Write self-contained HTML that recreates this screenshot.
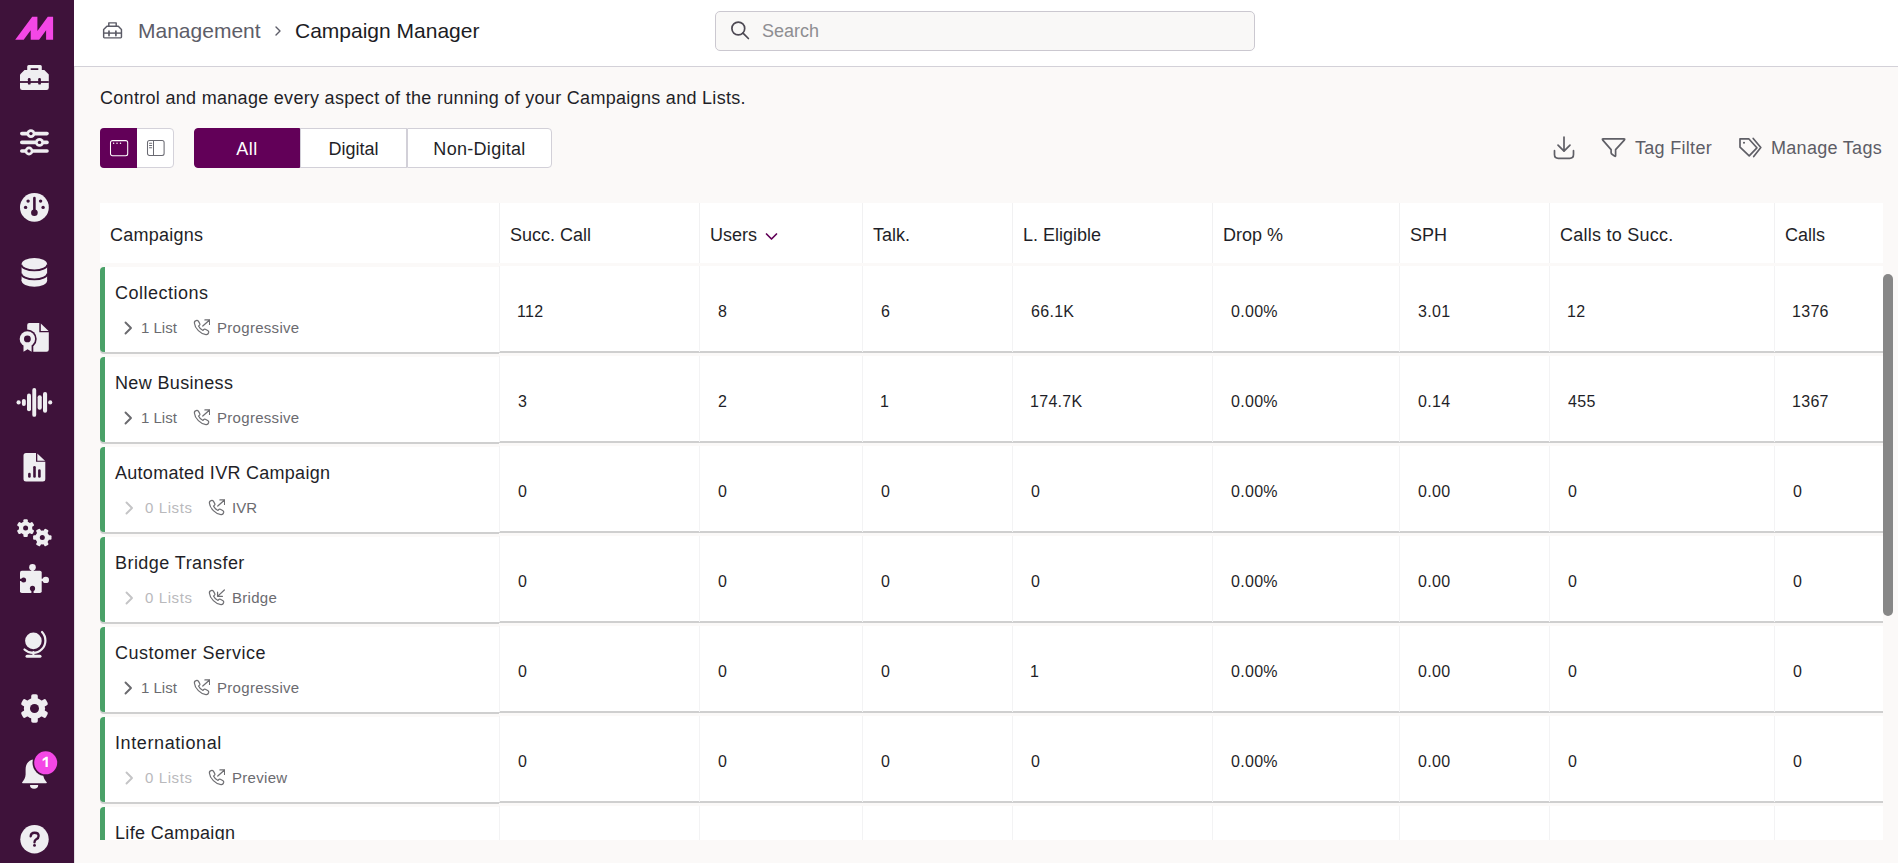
<!DOCTYPE html>
<html><head><meta charset="utf-8">
<style>
*{box-sizing:border-box;margin:0;padding:0}
html,body{width:1898px;height:863px;overflow:hidden;background:#fbf9f8;font-family:"Liberation Sans",sans-serif;color:#1d1d24;position:relative}
.abs{position:absolute}
#side{position:absolute;left:0;top:0;width:74px;height:863px;background:#3e123a}
#side::after{content:"";position:absolute;right:-1px;top:0;width:1px;height:863px;background:#e3e0e4}
#hdr{position:absolute;left:74px;top:0;width:1824px;height:67px;background:#fff;border-bottom:1px solid #d3d1d8}
.crumb{position:absolute;top:19px;font-size:21px;white-space:nowrap}
#search{position:absolute;left:715px;top:11px;width:540px;height:40px;border:1px solid #cbc8d0;border-radius:5px;background:#f9f8f7}
#sph{position:absolute;left:762px;top:21px;font-size:18px;color:#8e8e92;white-space:nowrap}
#desc{position:absolute;left:100px;top:88px;font-size:18px;letter-spacing:0.3px;white-space:nowrap;color:#1f1f28}
#vt{position:absolute;left:100px;top:128px;width:74px;height:40px;border:1px solid #d4d2da;border-radius:4px;background:#fff}
#vta{position:absolute;left:100px;top:128px;width:37px;height:40px;border-radius:4px 0 0 4px;background:#620058}
.seg{position:absolute;top:128px;height:40px;border:1px solid #d2d0d8;background:#fff;font-size:18px;text-align:center;line-height:40px;color:#1f1f28}
.act{background:#620058;color:#fff;border-color:#620058}
.tool{position:absolute;top:138px;font-size:18px;letter-spacing:0.3px;color:#5d5d66;white-space:nowrap}
#tbl{position:absolute;left:0;top:0;width:1898px;height:840px;overflow:hidden}
.th{position:absolute;top:203px;height:60px;background:#fff;font-size:18px;line-height:64px;padding-left:10px;white-space:nowrap;color:#1f1f28}
.card{position:absolute;left:100px;width:399px;height:85px;background:#fff;border-left:5px solid #4aa168;border-radius:4px 0 0 4px;box-shadow:0 2px 0 #cfcfcf}
.cname{position:absolute;left:115px;font-size:18px;letter-spacing:0.6px;white-space:nowrap;color:#1f1f28}
.sub{position:absolute;font-size:15px;letter-spacing:0.3px;white-space:nowrap;color:#6b6b70}
.chev{position:absolute;left:123px}
.ph{position:absolute}
.vd{position:absolute;width:1px;height:86px;background:#f3f3f4}
.num{position:absolute;font-size:16px;letter-spacing:0.3px;white-space:nowrap;color:#1f1f28}
#sb{position:absolute;left:1883px;top:274px;width:10px;height:342px;border-radius:5px;background:#878787}

.card2{position:absolute;left:499px;width:1384px;height:85px;background:#fff;box-shadow:0 2px 0 #cfcfcf}

</style></head><body>
<div id="side">
<svg width="74" height="863" viewBox="0 0 74 863" style="position:absolute;left:0;top:0">
<polygon fill="#f447e6" points="15.2,39.8 32.2,16.8 37.4,16.8 37.4,30.9 47.8,16.8 53.1,16.8 53.1,39.8 46.1,39.8 46.1,30.2 39.1,39.8 30.7,39.8 30.7,30.2 23.7,39.8"/>
<g fill="#efeef1"><path d="M28.7,65 L40.3,65 Q41.8,65 41.8,66.5 L41.8,71 L38.3,71 L38.3,68.2 L30.7,68.2 L30.7,71 L27.2,71 L27.2,66.5 Q27.2,65 28.7,65Z"/><path d="M24.5,70 L44.3,70 L48.8,74.5 L48.8,87.8 Q48.8,90 46.6,90 L22.2,90 Q20,90 20,87.8 L20,74.5Z"/></g>
<g fill="#3e123a"><rect x="20" y="81.1" width="28.8" height="1.8"/><rect x="27.9" y="78" width="2.7" height="6.6" rx="1.2"/><rect x="38.2" y="78" width="2.7" height="6.6" rx="1.2"/></g>
<g stroke="#efeef1" stroke-width="3.6" stroke-linecap="round"><line x1="21.8" y1="133.6" x2="47" y2="133.6"/><line x1="21.8" y1="142.4" x2="47" y2="142.4"/><line x1="21.8" y1="151" x2="47" y2="151"/></g>
<circle cx="30.9" cy="133.6" r="4.4" fill="#efeef1"/><circle cx="30.9" cy="133.6" r="1.7" fill="#3e123a"/>
<circle cx="39.5" cy="142.4" r="4.4" fill="#efeef1"/><circle cx="39.5" cy="142.4" r="1.7" fill="#3e123a"/>
<circle cx="29" cy="151" r="4.4" fill="#efeef1"/><circle cx="29" cy="151" r="1.7" fill="#3e123a"/>
<circle cx="34.4" cy="207.4" r="14.4" fill="#efeef1"/>
<g fill="#3e123a"><rect x="33.1" y="196.8" width="2.6" height="15" rx="1.3"/><circle cx="34.4" cy="212.7" r="3.3"/><circle cx="28.1" cy="201.1" r="1.7"/><circle cx="40.6" cy="201.1" r="1.7"/><circle cx="25.6" cy="207.4" r="1.7"/><circle cx="43.1" cy="207.4" r="1.7"/></g>
<g fill="#efeef1"><ellipse cx="34.35" cy="264.2" rx="12.75" ry="6.2"/><rect x="21.6" y="264.2" width="25.5" height="16.6"/><ellipse cx="34.35" cy="280.6" rx="12.75" ry="6.2"/></g>
<g fill="none" stroke="#3e123a" stroke-width="1.9"><path d="M21.2,264.4 A13.15,6 0 0 0 47.5,264.4"/><path d="M21.2,273.4 A13.15,6 0 0 0 47.5,273.4"/></g>
<path fill="#efeef1" d="M29.2,322.9 L39.3,322.9 L39.3,332.3 L48.8,332.3 L48.8,349.6 Q48.8,351.8 46.6,351.8 L29.4,351.8 Q27.2,351.8 27.2,349.6 L27.2,324.9 Q27.2,322.9 29.2,322.9Z"/>
<path fill="#efeef1" d="M40.8,323.4 L48.6,331.1 L40.8,331.1Z"/>
<circle cx="27.4" cy="338.9" r="9.3" fill="#3e123a"/><path fill="#3e123a" d="M22,343 L33.3,343 L33.3,353 L22,353Z"/>
<circle cx="27.4" cy="338.9" r="7.7" fill="#efeef1"/><path fill="#efeef1" d="M23.5,344 L31.6,344 L31.6,351.8 L27.6,349.3 L23.5,351.8Z"/><circle cx="27.4" cy="338.9" r="3.4" fill="#3e123a"/>
<g fill="#efeef1"><circle cx="18.6" cy="402.4" r="2.1"/><rect x="21.9" y="398.9" width="3.9" height="7" rx="1.9"/><rect x="27" y="393.6" width="4" height="17.6" rx="2"/><rect x="32.3" y="388" width="3.9" height="28.8" rx="1.9"/><rect x="37.6" y="395.2" width="4.2" height="14.6" rx="2"/><rect x="43" y="392" width="4.1" height="20.8" rx="2"/><circle cx="50.2" cy="402.4" r="2.1"/></g>
<path fill="#efeef1" d="M26,453 L36,453 L36,461.8 L45.3,461.8 L45.3,479 Q45.3,481.5 42.8,481.5 L26,481.5 Q23.5,481.5 23.5,479 L23.5,455.5 Q23.5,453 26,453Z"/>
<path fill="#efeef1" d="M37.3,453.4 L45,460.8 L37.3,460.8Z"/>
<g fill="#3e123a"><rect x="28.1" y="472.7" width="2.6" height="5.1" rx="1.3"/><rect x="33.2" y="466" width="2.6" height="11.8" rx="1.3"/><rect x="38.1" y="469.2" width="2.6" height="8.6" rx="1.3"/></g>
<circle cx="25.6" cy="528.1" r="6.7" fill="#efeef1"/><rect x="23.40" y="519.20" width="4.4" height="8.9" rx="1.1" fill="#efeef1" transform="rotate(0 25.6 528.1)"/><rect x="23.40" y="519.20" width="4.4" height="8.9" rx="1.1" fill="#efeef1" transform="rotate(60 25.6 528.1)"/><rect x="23.40" y="519.20" width="4.4" height="8.9" rx="1.1" fill="#efeef1" transform="rotate(120 25.6 528.1)"/><rect x="23.40" y="519.20" width="4.4" height="8.9" rx="1.1" fill="#efeef1" transform="rotate(180 25.6 528.1)"/><rect x="23.40" y="519.20" width="4.4" height="8.9" rx="1.1" fill="#efeef1" transform="rotate(240 25.6 528.1)"/><rect x="23.40" y="519.20" width="4.4" height="8.9" rx="1.1" fill="#efeef1" transform="rotate(300 25.6 528.1)"/><circle cx="25.6" cy="528.1" r="2.5" fill="#3e123a"/>
<circle cx="42.3" cy="537.5" r="6.9" fill="#efeef1"/><rect x="40.05" y="528.30" width="4.5" height="9.2" rx="1.1" fill="#efeef1" transform="rotate(30 42.3 537.5)"/><rect x="40.05" y="528.30" width="4.5" height="9.2" rx="1.1" fill="#efeef1" transform="rotate(90 42.3 537.5)"/><rect x="40.05" y="528.30" width="4.5" height="9.2" rx="1.1" fill="#efeef1" transform="rotate(150 42.3 537.5)"/><rect x="40.05" y="528.30" width="4.5" height="9.2" rx="1.1" fill="#efeef1" transform="rotate(210 42.3 537.5)"/><rect x="40.05" y="528.30" width="4.5" height="9.2" rx="1.1" fill="#efeef1" transform="rotate(270 42.3 537.5)"/><rect x="40.05" y="528.30" width="4.5" height="9.2" rx="1.1" fill="#efeef1" transform="rotate(330 42.3 537.5)"/><circle cx="42.3" cy="537.5" r="2.5" fill="#3e123a"/>
<g fill="#efeef1"><rect x="20" y="570.7" width="21.7" height="22.3" rx="1.8"/><circle cx="32.5" cy="567.2" r="3.3"/><rect x="31.3" y="568" width="2.4" height="4"/><circle cx="45.8" cy="579.9" r="3.2"/><rect x="40.5" y="578.7" width="4" height="2.4"/></g>
<g fill="#3e123a"><circle cx="23.6" cy="579.9" r="2.5"/><rect x="19" y="578.8" width="3.5" height="2.2"/><circle cx="32.5" cy="588.4" r="2.6"/><rect x="31.4" y="589.5" width="2.2" height="4.5"/></g>
<circle cx="33.4" cy="640.9" r="8.3" fill="#efeef1"/>
<path fill="none" stroke="#efeef1" stroke-width="2.2" stroke-linecap="round" d="M42.01,631.98 A12.4,12.4 0 0 1 24.48,649.51"/>
<g stroke="#efeef1" stroke-linecap="round"><line x1="33.4" y1="652" x2="33.4" y2="655" stroke-width="2"/><line x1="27" y1="656.3" x2="40" y2="656.3" stroke-width="3"/></g>
<circle cx="34.5" cy="708.5" r="10.6" fill="#efeef1"/><rect x="31.20" y="694.30" width="6.6" height="14.2" rx="1.8" fill="#efeef1" transform="rotate(0 34.5 708.5)"/><rect x="31.20" y="694.30" width="6.6" height="14.2" rx="1.8" fill="#efeef1" transform="rotate(60 34.5 708.5)"/><rect x="31.20" y="694.30" width="6.6" height="14.2" rx="1.8" fill="#efeef1" transform="rotate(120 34.5 708.5)"/><rect x="31.20" y="694.30" width="6.6" height="14.2" rx="1.8" fill="#efeef1" transform="rotate(180 34.5 708.5)"/><rect x="31.20" y="694.30" width="6.6" height="14.2" rx="1.8" fill="#efeef1" transform="rotate(240 34.5 708.5)"/><rect x="31.20" y="694.30" width="6.6" height="14.2" rx="1.8" fill="#efeef1" transform="rotate(300 34.5 708.5)"/><circle cx="34.5" cy="708.5" r="4.5" fill="#3e123a"/>
<path fill="#efeef1" d="M34.4,759.5 C28.6,759.5 25.6,764 25.6,769.5 L25.6,774.5 C25.6,777.8 23.6,780.5 22.2,782.2 Q21.7,783.2 22.8,783.2 L46.1,783.2 Q47.2,783.2 46.7,782.2 C45.2,780.5 43.2,777.8 43.2,774.5 L43.2,769.5 C43.2,764 40.2,759.5 34.4,759.5Z"/>
<path fill="#efeef1" d="M30,785 L38.2,785 A4.1,3.8 0 0 1 30,785Z"/>
<circle cx="45.7" cy="762.8" r="13.2" fill="#3e123a"/><circle cx="45.7" cy="762.8" r="11.5" fill="#f447e6"/>
<path fill="#fff" d="M42.6,759 L45.9,756.8 L47.8,756.8 L47.8,767 L45.5,767 L45.5,759.6 L42.6,761.2Z"/>
<circle cx="34.5" cy="839.3" r="14.2" fill="#efeef1"/>
<path fill="none" stroke="#3e123a" stroke-width="2.4" stroke-linecap="round" d="M30.7,836.2 Q30.9,832.8 34.6,832.8 Q38.6,832.8 38.6,835.9 Q38.6,838 36.3,839.2 Q34.5,840.3 34.5,842.2"/><circle cx="34.5" cy="845.4" r="1.45" fill="#3e123a"/>
</svg>
</div>
<div id="hdr"></div>
<svg class="abs" style="left:102px;top:21px" width="22" height="19" viewBox="0 0 22 19"><g fill="none" stroke="#5b5b66" stroke-width="1.45" stroke-linejoin="round"><path d="M6.8,5.2 L6.8,1.85 L14.2,1.85 L14.2,5.2"/><path d="M4.9,5.2 L16.3,5.2 L19.45,8.4 L19.45,16.1 Q19.45,16.85 18.7,16.85 L2.4,16.85 Q1.65,16.85 1.65,16.1 L1.65,8.4 Z"/><path d="M1.65,12.1 L19.45,12.1"/><path d="M7,10.2 L7,14.6 M13.9,10.2 L13.9,14.6" stroke-linecap="round" stroke-width="1.7"/></g></svg>
<div class="crumb" style="left:138px;color:#5d5d68">Management</div>
<svg class="abs" style="left:274px;top:25px" width="8" height="12" viewBox="0 0 8 12"><path d="M2,2 L6,6 L2,10" fill="none" stroke="#5d5d68" stroke-width="1.4" stroke-linecap="round" stroke-linejoin="round"/></svg>
<div class="crumb" style="left:295px;color:#1c1c24">Campaign Manager</div>
<div id="search"></div>
<svg class="abs" style="left:728px;top:19px" width="24" height="24" viewBox="0 0 24 24"><g fill="none" stroke="#4d4953" stroke-width="1.7" stroke-linecap="round"><circle cx="10.3" cy="9.5" r="6.4"/><path d="M15,14.2 L20.4,19.5"/></g></svg>
<div id="sph">Search</div>
<div id="desc">Control and manage every aspect of the running of your Campaigns and Lists.</div>
<div id="vt"></div>
<div id="vta"></div>
<svg class="abs" style="left:109px;top:139px" width="20" height="18" viewBox="0 0 20 18"><g fill="none" stroke="#fff" stroke-width="1.05"><rect x="1.5" y="1.6" width="17.2" height="15.2" rx="2"/></g><g fill="#fff"><circle cx="4.6" cy="4.3" r="0.75"/><circle cx="8" cy="4.3" r="0.75"/><circle cx="11.5" cy="4.3" r="0.75"/></g></svg>
<svg class="abs" style="left:146px;top:139px" width="20" height="18" viewBox="0 0 20 18"><g fill="none" stroke="#6a6a72" stroke-width="1.05"><rect x="1.5" y="1.5" width="16.6" height="15" rx="2"/><path d="M7.5,1.5 L7.5,16.5"/><path d="M3.5,4.2 L5.7,4.2 M3.5,6.5 L5.7,6.5 M3.5,8.8 L5.7,8.8" stroke-linecap="round"/></g></svg>
<div class="seg act" style="left:194px;width:106px;border-radius:4px 0 0 4px;letter-spacing:0.5px">All</div>
<div class="seg" style="left:300px;width:107px">Digital</div>
<div class="seg" style="left:407px;width:145px;border-radius:0 4px 4px 0;letter-spacing:0.3px">Non-Digital</div>
<svg class="abs" style="left:1552px;top:135px" width="24" height="26" viewBox="0 0 24 26"><g fill="none" stroke="#5f5f66" stroke-width="1.7" stroke-linecap="round" stroke-linejoin="round"><path d="M12,2 L12,16.2 M6,10.1 L12,16.2 L18,10.1"/><path d="M2.5,15.7 L2.5,19.5 Q2.5,23.3 6.3,23.3 L17.7,23.3 Q21.5,23.3 21.5,19.5 L21.5,15.7"/></g></svg>
<svg class="abs" style="left:1600px;top:135px" width="28" height="24" viewBox="0 0 28 24"><path d="M3.3,3.8 L23.8,3.8 Q25.4,3.8 24.3,5.1 L15.6,14.6 L15.6,20.6 Q15.6,21.8 14.6,21.1 L12,19.3 Q11.1,18.7 11.1,17.6 L11.1,14.6 L2.8,5.1 Q1.7,3.8 3.3,3.8Z" fill="none" stroke="#5f5f66" stroke-width="1.7" stroke-linejoin="round"/></svg>
<div class="tool" style="left:1635px">Tag Filter</div>
<svg class="abs" style="left:1736px;top:135px" width="28" height="24" viewBox="0 0 28 24"><g fill="none" stroke="#5f5f66" stroke-width="1.7" stroke-linejoin="round"><path d="M4,3.8 L12.7,3.8 L20.9,12.8 L13.2,20.9 L4,12.2 Z"/><path d="M17.2,3.5 L24.8,12.5 L17.7,21.5" stroke-linecap="round"/></g><circle cx="8" cy="7.8" r="1.05" fill="#5f5f66"/></svg>
<div class="tool" style="left:1771px">Manage Tags</div>
<div id="tbl">
<div class="th" style="left:100px;width:399px;letter-spacing:0.25px;"><span>Campaigns</span></div>
<div class="th" style="left:499px;width:200px;border-left:1px solid #f1f1f2;"><span>Succ. Call</span></div>
<div class="th" style="left:699px;width:163px;border-left:1px solid #f1f1f2;"><span>Users</span><svg style="position:absolute;left:65px;top:29px" width="13" height="9" viewBox="0 0 13 9"><path d="M1.5,2 L6.5,7 L11.5,2" fill="none" stroke="#620058" stroke-width="1.7" stroke-linecap="round" stroke-linejoin="round"/></svg></div>
<div class="th" style="left:862px;width:150px;border-left:1px solid #f1f1f2;"><span>Talk.</span></div>
<div class="th" style="left:1012px;width:200px;border-left:1px solid #f1f1f2;"><span>L. Eligible</span></div>
<div class="th" style="left:1212px;width:187px;border-left:1px solid #f1f1f2;"><span>Drop %</span></div>
<div class="th" style="left:1399px;width:150px;border-left:1px solid #f1f1f2;"><span>SPH</span></div>
<div class="th" style="left:1549px;width:225px;border-left:1px solid #f1f1f2;letter-spacing:0.25px;"><span>Calls to Succ.</span></div>
<div class="th" style="left:1774px;width:109px;border-left:1px solid #f1f1f2;"><span>Calls</span></div>
<div class="card" style="top:267px"></div><div class="card2" style="top:266px"></div>
<div class="cname" style="top:283px;letter-spacing:0.5px">Collections</div>
<svg class="chev" style="top:321px;left:123px" width="10" height="14" viewBox="0 0 10 14"><path d="M2.5,1.5 L8,7 L2.5,12.5" fill="none" stroke="#6a6a6e" stroke-width="1.9" stroke-linecap="round" stroke-linejoin="round"/></svg>
<div class="sub" style="left:141px;top:319px;color:#6b6b70;letter-spacing:0px">1 List</div>
<svg class="ph" style="left:193px;top:319px" width="17" height="17" viewBox="0 0 16 16"><g fill="none" stroke="#6e6e72" stroke-width="1.15" stroke-linecap="round" stroke-linejoin="round"><path d="M3.6,1.2 C2.4,1.4 1.2,2.4 1.3,3.8 C1.6,8.6 7.4,14.4 12.2,14.7 C13.6,14.8 14.6,13.6 14.8,12.4 C14.9,11.6 14.4,11.2 13.8,10.8 L11.6,9.6 C11,9.3 10.4,9.5 10,10 L9.4,10.8 C7.6,10 6,8.4 5.2,6.6 L6,6 C6.5,5.6 6.7,5 6.4,4.4 L5.2,2.2 C4.8,1.6 4.4,1.1 3.6,1.2Z"/><path d="M9.2,6.6 L15.6,0.9 M11.2,0.9 L15.6,0.9 L15.6,5.1"/></g></svg>
<div class="sub" style="left:217px;top:319px;letter-spacing:0.3px">Progressive</div>
<div class="vd" style="left:499px;top:266px"></div>
<div class="num" style="left:517px;top:303px">112</div>
<div class="vd" style="left:699px;top:266px"></div>
<div class="num" style="left:718px;top:303px">8</div>
<div class="vd" style="left:862px;top:266px"></div>
<div class="num" style="left:881px;top:303px">6</div>
<div class="vd" style="left:1012px;top:266px"></div>
<div class="num" style="left:1031px;top:303px">66.1K</div>
<div class="vd" style="left:1212px;top:266px"></div>
<div class="num" style="left:1231px;top:303px">0.00%</div>
<div class="vd" style="left:1399px;top:266px"></div>
<div class="num" style="left:1418px;top:303px">3.01</div>
<div class="vd" style="left:1549px;top:266px"></div>
<div class="num" style="left:1567px;top:303px">12</div>
<div class="vd" style="left:1774px;top:266px"></div>
<div class="num" style="left:1792px;top:303px">1376</div>
<div class="card" style="top:357px"></div><div class="card2" style="top:356px"></div>
<div class="cname" style="top:373px;letter-spacing:0.35px">New Business</div>
<svg class="chev" style="top:411px;left:123px" width="10" height="14" viewBox="0 0 10 14"><path d="M2.5,1.5 L8,7 L2.5,12.5" fill="none" stroke="#6a6a6e" stroke-width="1.9" stroke-linecap="round" stroke-linejoin="round"/></svg>
<div class="sub" style="left:141px;top:409px;color:#6b6b70;letter-spacing:0px">1 List</div>
<svg class="ph" style="left:193px;top:409px" width="17" height="17" viewBox="0 0 16 16"><g fill="none" stroke="#6e6e72" stroke-width="1.15" stroke-linecap="round" stroke-linejoin="round"><path d="M3.6,1.2 C2.4,1.4 1.2,2.4 1.3,3.8 C1.6,8.6 7.4,14.4 12.2,14.7 C13.6,14.8 14.6,13.6 14.8,12.4 C14.9,11.6 14.4,11.2 13.8,10.8 L11.6,9.6 C11,9.3 10.4,9.5 10,10 L9.4,10.8 C7.6,10 6,8.4 5.2,6.6 L6,6 C6.5,5.6 6.7,5 6.4,4.4 L5.2,2.2 C4.8,1.6 4.4,1.1 3.6,1.2Z"/><path d="M9.2,6.6 L15.6,0.9 M11.2,0.9 L15.6,0.9 L15.6,5.1"/></g></svg>
<div class="sub" style="left:217px;top:409px;letter-spacing:0.3px">Progressive</div>
<div class="vd" style="left:499px;top:356px"></div>
<div class="num" style="left:518px;top:393px">3</div>
<div class="vd" style="left:699px;top:356px"></div>
<div class="num" style="left:718px;top:393px">2</div>
<div class="vd" style="left:862px;top:356px"></div>
<div class="num" style="left:880px;top:393px">1</div>
<div class="vd" style="left:1012px;top:356px"></div>
<div class="num" style="left:1030px;top:393px">174.7K</div>
<div class="vd" style="left:1212px;top:356px"></div>
<div class="num" style="left:1231px;top:393px">0.00%</div>
<div class="vd" style="left:1399px;top:356px"></div>
<div class="num" style="left:1418px;top:393px">0.14</div>
<div class="vd" style="left:1549px;top:356px"></div>
<div class="num" style="left:1568px;top:393px">455</div>
<div class="vd" style="left:1774px;top:356px"></div>
<div class="num" style="left:1792px;top:393px">1367</div>
<div class="card" style="top:447px"></div><div class="card2" style="top:446px"></div>
<div class="cname" style="top:463px;letter-spacing:0.28px">Automated IVR Campaign</div>
<svg class="chev" style="top:501px;left:124px" width="10" height="14" viewBox="0 0 10 14"><path d="M2.5,1.5 L8,7 L2.5,12.5" fill="none" stroke="#c4c4c6" stroke-width="1.9" stroke-linecap="round" stroke-linejoin="round"/></svg>
<div class="sub" style="left:145px;top:499px;color:#b9b9bc;letter-spacing:0.6px">0 Lists</div>
<svg class="ph" style="left:208px;top:499px" width="17" height="17" viewBox="0 0 16 16"><g fill="none" stroke="#6e6e72" stroke-width="1.15" stroke-linecap="round" stroke-linejoin="round"><path d="M3.6,1.2 C2.4,1.4 1.2,2.4 1.3,3.8 C1.6,8.6 7.4,14.4 12.2,14.7 C13.6,14.8 14.6,13.6 14.8,12.4 C14.9,11.6 14.4,11.2 13.8,10.8 L11.6,9.6 C11,9.3 10.4,9.5 10,10 L9.4,10.8 C7.6,10 6,8.4 5.2,6.6 L6,6 C6.5,5.6 6.7,5 6.4,4.4 L5.2,2.2 C4.8,1.6 4.4,1.1 3.6,1.2Z"/><path d="M9.2,6.6 L15.6,0.9 M11.2,0.9 L15.6,0.9 L15.6,5.1"/></g></svg>
<div class="sub" style="left:232px;top:499px;letter-spacing:0px">IVR</div>
<div class="vd" style="left:499px;top:446px"></div>
<div class="num" style="left:518px;top:483px">0</div>
<div class="vd" style="left:699px;top:446px"></div>
<div class="num" style="left:718px;top:483px">0</div>
<div class="vd" style="left:862px;top:446px"></div>
<div class="num" style="left:881px;top:483px">0</div>
<div class="vd" style="left:1012px;top:446px"></div>
<div class="num" style="left:1031px;top:483px">0</div>
<div class="vd" style="left:1212px;top:446px"></div>
<div class="num" style="left:1231px;top:483px">0.00%</div>
<div class="vd" style="left:1399px;top:446px"></div>
<div class="num" style="left:1418px;top:483px">0.00</div>
<div class="vd" style="left:1549px;top:446px"></div>
<div class="num" style="left:1568px;top:483px">0</div>
<div class="vd" style="left:1774px;top:446px"></div>
<div class="num" style="left:1793px;top:483px">0</div>
<div class="card" style="top:537px"></div><div class="card2" style="top:536px"></div>
<div class="cname" style="top:553px;letter-spacing:0.45px">Bridge Transfer</div>
<svg class="chev" style="top:591px;left:124px" width="10" height="14" viewBox="0 0 10 14"><path d="M2.5,1.5 L8,7 L2.5,12.5" fill="none" stroke="#c4c4c6" stroke-width="1.9" stroke-linecap="round" stroke-linejoin="round"/></svg>
<div class="sub" style="left:145px;top:589px;color:#b9b9bc;letter-spacing:0.6px">0 Lists</div>
<svg class="ph" style="left:208px;top:589px" width="17" height="17" viewBox="0 0 16 16"><g fill="none" stroke="#6e6e72" stroke-width="1.15" stroke-linecap="round" stroke-linejoin="round"><path d="M3.6,1.2 C2.4,1.4 1.2,2.4 1.3,3.8 C1.6,8.6 7.4,14.4 12.2,14.7 C13.6,14.8 14.6,13.6 14.8,12.4 C14.9,11.6 14.4,11.2 13.8,10.8 L11.6,9.6 C11,9.3 10.4,9.5 10,10 L9.4,10.8 C7.6,10 6,8.4 5.2,6.6 L6,6 C6.5,5.6 6.7,5 6.4,4.4 L5.2,2.2 C4.8,1.6 4.4,1.1 3.6,1.2Z"/><path d="M15.4,0.9 L9,6.9 M9,3 L9,6.9 L13.6,6.9"/></g></svg>
<div class="sub" style="left:232px;top:589px;letter-spacing:0.3px">Bridge</div>
<div class="vd" style="left:499px;top:536px"></div>
<div class="num" style="left:518px;top:573px">0</div>
<div class="vd" style="left:699px;top:536px"></div>
<div class="num" style="left:718px;top:573px">0</div>
<div class="vd" style="left:862px;top:536px"></div>
<div class="num" style="left:881px;top:573px">0</div>
<div class="vd" style="left:1012px;top:536px"></div>
<div class="num" style="left:1031px;top:573px">0</div>
<div class="vd" style="left:1212px;top:536px"></div>
<div class="num" style="left:1231px;top:573px">0.00%</div>
<div class="vd" style="left:1399px;top:536px"></div>
<div class="num" style="left:1418px;top:573px">0.00</div>
<div class="vd" style="left:1549px;top:536px"></div>
<div class="num" style="left:1568px;top:573px">0</div>
<div class="vd" style="left:1774px;top:536px"></div>
<div class="num" style="left:1793px;top:573px">0</div>
<div class="card" style="top:627px"></div><div class="card2" style="top:626px"></div>
<div class="cname" style="top:643px;letter-spacing:0.5px">Customer Service</div>
<svg class="chev" style="top:681px;left:123px" width="10" height="14" viewBox="0 0 10 14"><path d="M2.5,1.5 L8,7 L2.5,12.5" fill="none" stroke="#6a6a6e" stroke-width="1.9" stroke-linecap="round" stroke-linejoin="round"/></svg>
<div class="sub" style="left:141px;top:679px;color:#6b6b70;letter-spacing:0px">1 List</div>
<svg class="ph" style="left:193px;top:679px" width="17" height="17" viewBox="0 0 16 16"><g fill="none" stroke="#6e6e72" stroke-width="1.15" stroke-linecap="round" stroke-linejoin="round"><path d="M3.6,1.2 C2.4,1.4 1.2,2.4 1.3,3.8 C1.6,8.6 7.4,14.4 12.2,14.7 C13.6,14.8 14.6,13.6 14.8,12.4 C14.9,11.6 14.4,11.2 13.8,10.8 L11.6,9.6 C11,9.3 10.4,9.5 10,10 L9.4,10.8 C7.6,10 6,8.4 5.2,6.6 L6,6 C6.5,5.6 6.7,5 6.4,4.4 L5.2,2.2 C4.8,1.6 4.4,1.1 3.6,1.2Z"/><path d="M9.2,6.6 L15.6,0.9 M11.2,0.9 L15.6,0.9 L15.6,5.1"/></g></svg>
<div class="sub" style="left:217px;top:679px;letter-spacing:0.3px">Progressive</div>
<div class="vd" style="left:499px;top:626px"></div>
<div class="num" style="left:518px;top:663px">0</div>
<div class="vd" style="left:699px;top:626px"></div>
<div class="num" style="left:718px;top:663px">0</div>
<div class="vd" style="left:862px;top:626px"></div>
<div class="num" style="left:881px;top:663px">0</div>
<div class="vd" style="left:1012px;top:626px"></div>
<div class="num" style="left:1030px;top:663px">1</div>
<div class="vd" style="left:1212px;top:626px"></div>
<div class="num" style="left:1231px;top:663px">0.00%</div>
<div class="vd" style="left:1399px;top:626px"></div>
<div class="num" style="left:1418px;top:663px">0.00</div>
<div class="vd" style="left:1549px;top:626px"></div>
<div class="num" style="left:1568px;top:663px">0</div>
<div class="vd" style="left:1774px;top:626px"></div>
<div class="num" style="left:1793px;top:663px">0</div>
<div class="card" style="top:717px"></div><div class="card2" style="top:716px"></div>
<div class="cname" style="top:733px;letter-spacing:0.6px">International</div>
<svg class="chev" style="top:771px;left:124px" width="10" height="14" viewBox="0 0 10 14"><path d="M2.5,1.5 L8,7 L2.5,12.5" fill="none" stroke="#c4c4c6" stroke-width="1.9" stroke-linecap="round" stroke-linejoin="round"/></svg>
<div class="sub" style="left:145px;top:769px;color:#b9b9bc;letter-spacing:0.6px">0 Lists</div>
<svg class="ph" style="left:208px;top:769px" width="17" height="17" viewBox="0 0 16 16"><g fill="none" stroke="#6e6e72" stroke-width="1.15" stroke-linecap="round" stroke-linejoin="round"><path d="M3.6,1.2 C2.4,1.4 1.2,2.4 1.3,3.8 C1.6,8.6 7.4,14.4 12.2,14.7 C13.6,14.8 14.6,13.6 14.8,12.4 C14.9,11.6 14.4,11.2 13.8,10.8 L11.6,9.6 C11,9.3 10.4,9.5 10,10 L9.4,10.8 C7.6,10 6,8.4 5.2,6.6 L6,6 C6.5,5.6 6.7,5 6.4,4.4 L5.2,2.2 C4.8,1.6 4.4,1.1 3.6,1.2Z"/><path d="M9.2,6.6 L15.6,0.9 M11.2,0.9 L15.6,0.9 L15.6,5.1"/></g></svg>
<div class="sub" style="left:232px;top:769px;letter-spacing:0.3px">Preview</div>
<div class="vd" style="left:499px;top:716px"></div>
<div class="num" style="left:518px;top:753px">0</div>
<div class="vd" style="left:699px;top:716px"></div>
<div class="num" style="left:718px;top:753px">0</div>
<div class="vd" style="left:862px;top:716px"></div>
<div class="num" style="left:881px;top:753px">0</div>
<div class="vd" style="left:1012px;top:716px"></div>
<div class="num" style="left:1031px;top:753px">0</div>
<div class="vd" style="left:1212px;top:716px"></div>
<div class="num" style="left:1231px;top:753px">0.00%</div>
<div class="vd" style="left:1399px;top:716px"></div>
<div class="num" style="left:1418px;top:753px">0.00</div>
<div class="vd" style="left:1549px;top:716px"></div>
<div class="num" style="left:1568px;top:753px">0</div>
<div class="vd" style="left:1774px;top:716px"></div>
<div class="num" style="left:1793px;top:753px">0</div>
<div class="card" style="top:807px"></div><div class="card2" style="top:806px"></div>
<div class="cname" style="top:823px;letter-spacing:0.33px">Life Campaign</div>
<div class="vd" style="left:499px;top:806px"></div>
<div class="vd" style="left:699px;top:806px"></div>
<div class="vd" style="left:862px;top:806px"></div>
<div class="vd" style="left:1012px;top:806px"></div>
<div class="vd" style="left:1212px;top:806px"></div>
<div class="vd" style="left:1399px;top:806px"></div>
<div class="vd" style="left:1549px;top:806px"></div>
<div class="vd" style="left:1774px;top:806px"></div>
</div>
<div id="sb"></div>
</body></html>
